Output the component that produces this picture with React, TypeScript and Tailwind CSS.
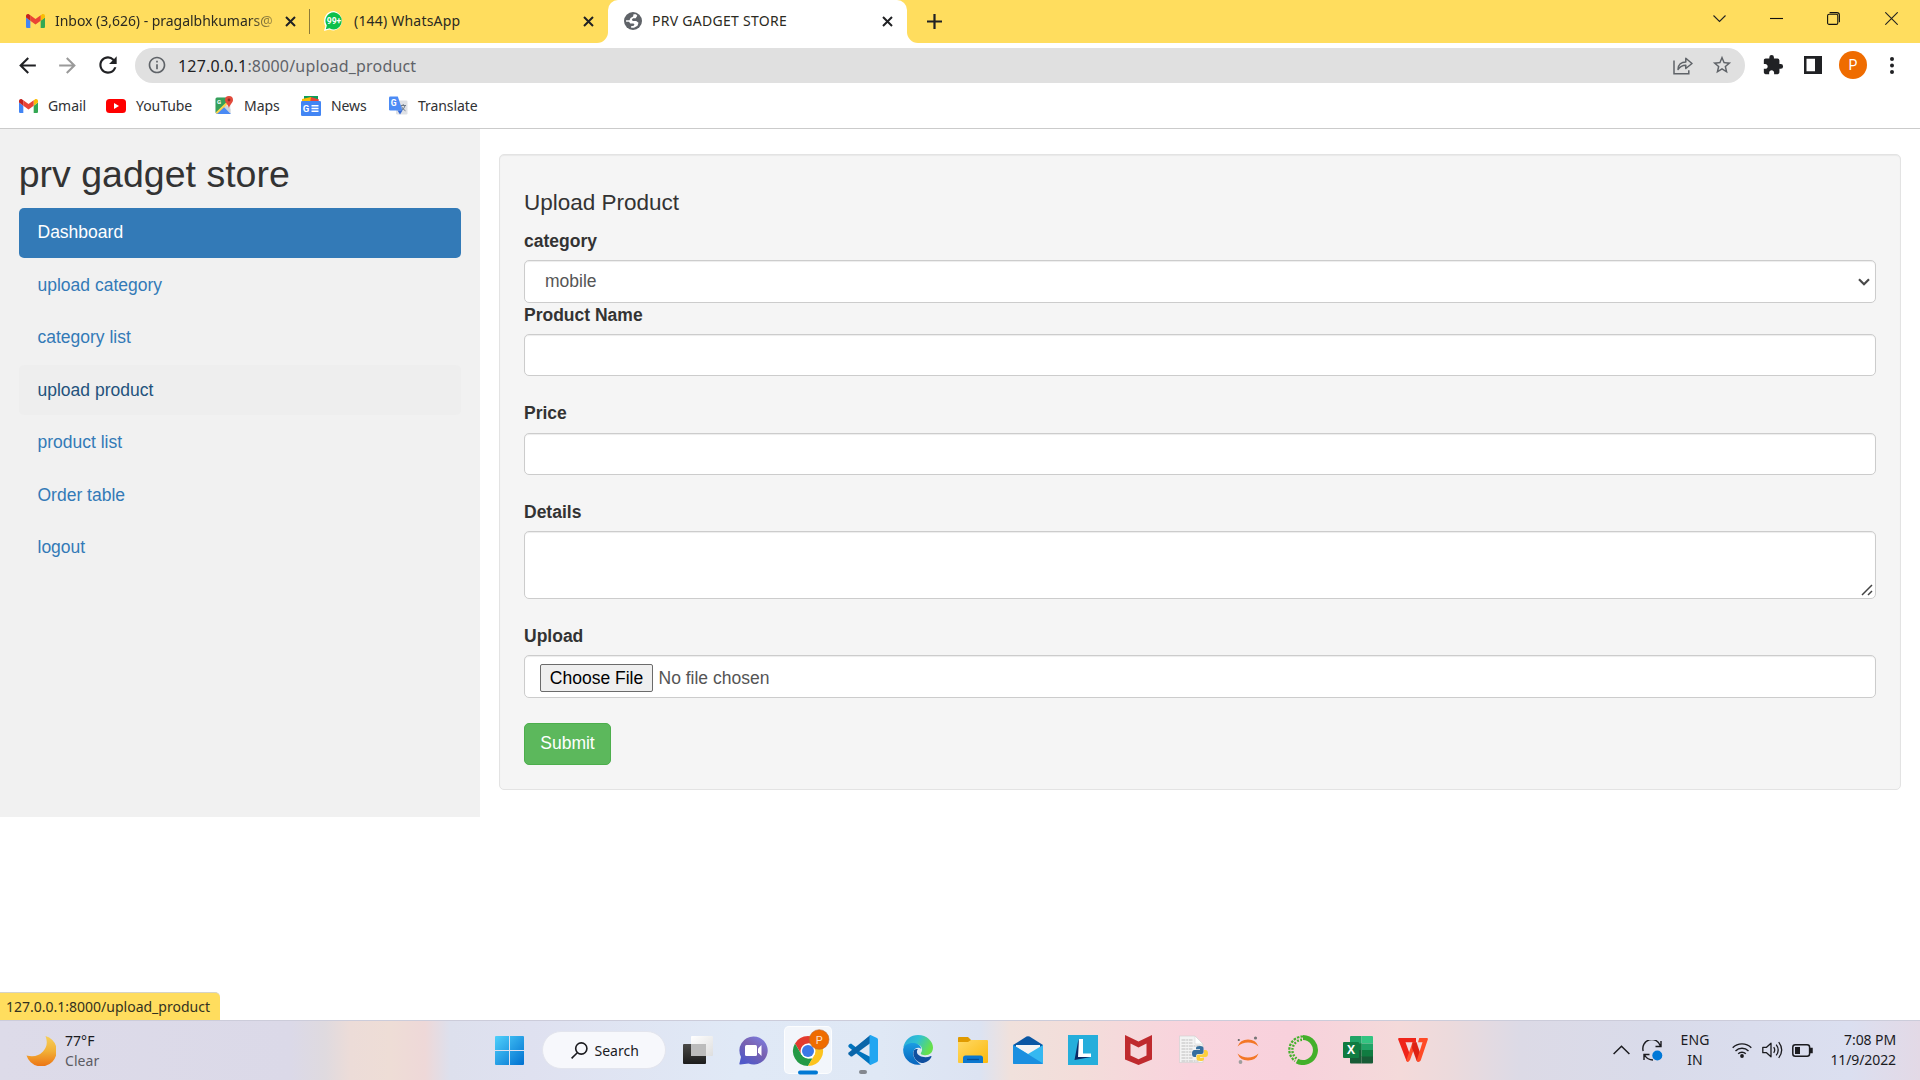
import type { ReactNode } from "react";
import { MdExtension, MdRefresh, MdStarOutline, MdArrowBack, MdArrowForward, MdInfoOutline } from "react-icons/md";

const ui = "font-['Noto_Sans','Open_Sans',sans-serif]";

function GmailIcon() {
  return (
    <svg className="h-[14px] w-[19px] shrink-0" viewBox="52 42 88 66" preserveAspectRatio="none">
      <path fill="#4285f4" d="M58 108h14V74L52 59v43c0 3.32 2.69 6 6 6" />
      <path fill="#34a853" d="M120 108h14c3.32 0 6-2.69 6-6V59l-20 15" />
      <path fill="#fbbc04" d="M120 48v26l20-15v-8c0-7.42-8.47-11.65-14.4-7.2" />
      <path fill="#ea4335" d="M72 74V48l24 18 24-18v26L96 92" />
      <path fill="#c5221f" d="M52 51v8l20 15V48l-5.6-4.2c-5.94-4.45-14.4-.22-14.4 7.2" />
    </svg>
  );
}

function WhatsAppIcon() {
  return (
    <svg className="h-5 w-5 shrink-0" viewBox="0 0 20 20">
      <path d="M10 0a10 10 0 0 1 0 19.6q-2.500 0-4.600-1.100L0 20l1.400-5A10 10 0 0 1 10 0" fill="#fff" />
      <path d="M10 1.200a8.700 8.700 0 0 1 0 17.300q-2.500 0-4.500-1.300L1.800 18.200l1-3.700A8.700 8.700 0 0 1 10 1.200" fill="#0cc04a" />
      <text x="10" y="13.400" textAnchor="middle" fontSize="8.800" fontWeight="700" fill="#fff" fontFamily="Roboto" textLength="14.500" lengthAdjust="spacingAndGlyphs">99+</text>
    </svg>
  );
}

function GlobeIcon() {
  return (
    <svg className="h-[18px] w-[18px] shrink-0" viewBox="0 0 18 18">
      <circle cx="9" cy="9" r="9" fill="#5f6368" />
      <path d="M9.500 2.200h2.500l1.300 1.600-1.600 2.400H9L7.800 7.800l1 1.200h3.400l2.300 1.800-1 3-3.500 2H7.200l-.2-1.500 2.800-.6.6-1.400-1-.9H6.300L5 9.800H2.100L2 8.200h3.500l1-2.300 2.600-1.500z" fill="#fff" />
    </svg>
  );
}

function CloseX({ className = "" }: { className?: string }) {
  return (
    <svg className={"h-[11px] w-[11px] shrink-0 " + className} viewBox="0 0 11 11" stroke="#202124" strokeWidth="2">
      <path d="M1 1l9 9M10 1L1 10" />
    </svg>
  );
}

function TabBar() {
  return (
    <div className={"flex h-[43px] bg-white text-[14px] text-[#2b2a22] " + ui}>
      <div className="flex w-[608px] items-center rounded-br-[11px] bg-[#ffdd5e] pb-[1px]">
        <div className="flex w-[309px] items-center pl-[26px]">
          <GmailIcon />
          <span className="ml-[10px] w-[219px] pb-[2px] tracking-[-0.03px] whitespace-nowrap [mask-image:linear-gradient(to_right,black_88%,transparent_106%)]">
            Inbox (3,626) - pragalbhkumars@
          </span>
          <CloseX className="ml-[11px]" />
        </div>
        <div className="h-[25px] w-[1px] bg-[#8c7a38]" />
        <div className="flex flex-1 items-center pl-[14px]">
          <WhatsAppIcon />
          <span className="ml-[10px] flex-1 pb-[2px] tracking-[0.2px]">(144) WhatsApp</span>
          <CloseX className="mr-[14px]" />
        </div>
      </div>
      <div className="w-[299px] bg-[#ffdd5e]">
        <div className="flex h-full items-center rounded-t-[10px] bg-white pb-[1px] pl-4">
          <GlobeIcon />
          <span className="ml-[10px] flex-1 pb-[2px] tracking-[0.28px]">PRV GADGET STORE</span>
          <CloseX className="mr-[14px]" />
        </div>
      </div>
      <div className="flex flex-1 items-center rounded-bl-[11px] bg-[#ffdd5e] pl-[20px]">
        <svg className="h-[15px] w-[15px]" viewBox="0 0 15 15" stroke="#202124" strokeWidth="2.200">
          <path d="M7.500 0v15M0 7.500h15" />
        </svg>
        <div className="ml-auto flex items-center gap-[44px] pr-[22px] pb-[6px]">
          <svg className="h-[13px] w-[13px] -translate-x-[1px]" viewBox="0 0 13 13" fill="none" stroke="#222" strokeWidth="1.100"><path d="M.5 3.500l6 6 6-6" /></svg>
          <svg className="h-[13px] w-[13px] -translate-x-[1px]" viewBox="0 0 13 13" stroke="#111" strokeWidth="1.100"><path d="M0 6.500h13" /></svg>
          <svg className="h-[13px] w-[13px] -translate-x-[1px]" viewBox="0 0 13 13" fill="none" stroke="#111" strokeWidth="1.100"><rect x=".6" y="2.200" width="10.200" height="10.200" rx="1.500" /><path d="M2.600 .6h7.200q2.600 0 2.600 2.600v7" /></svg>
          <svg className="h-[13px] w-[13px]" viewBox="0 0 13 13" stroke="#222" strokeWidth="1.100"><path d="M.3.3l12.400 12.400M12.700.3L.3 12.700" /></svg>
        </div>
      </div>
    </div>
  );
}

function AddressBar() {
  return (
    <div className="flex h-[45px] items-center bg-white pb-[1px]">
      <MdArrowBack className="ml-[15px] h-[25px] w-[25px] text-[#202124]" />
      <MdArrowForward className="ml-[15px] h-[25px] w-[25px] text-[#9a9a9a]" />
      <MdRefresh className="ml-[15px] h-[26px] w-[26px] text-[#202124]" />
      <div className="ml-[14px] flex h-[35px] w-[1610px] items-center rounded-full bg-[#e0e0e0] pl-[12px]">
        <MdInfoOutline className="h-5 w-5 text-[#5f6368]" />
        <span className={"ml-[11px] flex-1 pt-[1px] text-[16px] tracking-[0.18px] text-[#5f6368] " + ui}>
          <span className="text-[#202124]">127.0.0.1</span>:8000/upload_product
        </span>
        <svg className="h-[19px] w-[20px]" viewBox="0 0 20 19" fill="none" stroke="#5f6368" strokeWidth="1.500">
          <path d="M1 4.500v13.300h14.800v-3.500" />
          <path d="M5 13.500C5 8.500 8.500 6 12.800 6V2.200L19 7.500l-6.200 5V9.300C9.500 9.300 7 10.500 5 13.500z" strokeLinejoin="round" />
        </svg>
        <MdStarOutline className="mr-[12px] ml-[18px] h-[22px] w-[22px] text-[#5f6368]" />
      </div>
      <MdExtension className="ml-[17px] h-[22px] w-[22px] text-[#202124]" />
      <svg className="ml-[20px] h-[18px] w-[18px]" viewBox="0 0 18 18"><path fill="#202124" fillRule="evenodd" d="M0 0h18v18H0zM2.500 2.800h8.500v12.400H2.500z" /></svg>
      <div className="ml-[17px] flex h-7 w-7 items-center justify-center rounded-full bg-[#ef6c00] font-['Roboto',sans-serif] text-[14px] text-white">P</div>
      <svg className="ml-[23px] h-[17px] w-[4px]" viewBox="0 0 4 17" fill="#202124"><circle cx="2" cy="2" r="2" /><circle cx="2" cy="8.500" r="2" /><circle cx="2" cy="15" r="2" /></svg>
    </div>
  );
}

function YouTubeIcon() {
  return (
    <svg className="h-[14px] w-5" viewBox="0 0 20 14"><rect width="20" height="14" rx="3.500" fill="#f00" /><path d="M8 4v6l5-3z" fill="#fff" /></svg>
  );
}
function MapsIcon() {
  return (
    <svg className="h-[19px] w-[19px]" viewBox="0 0 19 19">
      <rect x=".5" y="1.500" width="15" height="16.500" rx="1.500" fill="#e8eaed" />
      <path d="M.5 3q0-1.500 1.500-1.500h9L12 7 .5 17z" fill="#34a05a" />
      <path d="M1 18L8.500 10l7.500 8z" fill="#4a8af4" />
      <path d="M10.500 8.500L15.500 13v4.500L8.500 10.500z" fill="#cfd3d8" />
      <path d="M.8 16.500L11 6.500l1.500 1.500L2 18z" fill="#fdd34a" />
      <text x="2" y="7.500" fontSize="6" fontWeight="700" fill="#fff" fontFamily="Roboto">G</text>
      <path d="M14 0a4 4 0 0 1 4 4c0 3-3.300 4.200-4 8.500-.7-4.300-4-5.500-4-8.500a4 4 0 0 1 4-4" fill="#e24a3b" /><circle cx="14" cy="4" r="1.400" fill="#8c2a22" />
    </svg>
  );
}
function NewsIcon() {
  return (
    <svg className="h-5 w-5" viewBox="0 0 20 20">
      <path d="M3 0h14v6H3z" fill="#0c9d58" /><path d="M1 3l9-2 1 5H1z" fill="#fbbc04" /><path d="M10 1l8 2.500L17 7H9z" fill="#ea4335" />
      <rect y="5" width="20" height="15" rx="1.300" fill="#4285f4" />
      <text x="1.800" y="15.800" fontSize="9.500" fontWeight="700" fill="#fff" fontFamily="Roboto">G</text>
      <path d="M10.500 9.800h7M10.500 12.500h7M10.500 15.200h7" stroke="#fff" strokeWidth="1.400" />
    </svg>
  );
}
function TranslateIcon() {
  return (
    <svg className="h-[19px] w-[19px]" viewBox="0 0 19 19">
      <rect x="7" y="4.500" width="11.500" height="14" rx="1.200" fill="#dfe1e5" />
      <path d="M11.500 9.500h5.500M14.200 8v1.500M16 9.800q-1 3.500-4 5M12.500 10.500q1.300 3 4 4.300" stroke="#6f7b8a" strokeWidth="1" fill="none" />
      <path d="M1.300.500h7.500L13.500 14.500H1.300Q0 14.500 0 13.200V1.800Q0 .500 1.300.500" fill="#4c8bf5" />
      <path d="M8.500 14.500h5L11 18.500z" fill="#3367d6" />
      <text x="1.800" y="10.300" fontSize="8.500" fontWeight="700" fill="#fff" fontFamily="Roboto">G</text>
    </svg>
  );
}

function Bookmark({ icon, label, className }: { icon: ReactNode; label: string; className: string }) {
  return (
    <div className={"flex items-center gap-[10px] " + className}>
      {icon}
      <span className="pb-[1px]">{label}</span>
    </div>
  );
}

function BookmarksBar() {
  return (
    <div className={"flex h-[41px] items-center border-b border-[#cbcbcb] bg-white pb-[5px] pl-[19px] text-[14px] tracking-[-0.07px] text-[#303134] " + ui}>
      <Bookmark className="w-[87px]" icon={<GmailIcon />} label="Gmail" />
      <Bookmark className="w-[109px]" icon={<YouTubeIcon />} label="YouTube" />
      <Bookmark className="w-[86px]" icon={<MapsIcon />} label="Maps" />
      <Bookmark className="w-[88px]" icon={<NewsIcon />} label="News" />
      <Bookmark className="" icon={<TranslateIcon />} label="Translate" />
    </div>
  );
}

const navItems = [
  { label: "Dashboard", style: "bg-[#337ab7] text-white" },
  { label: "upload category", style: "text-[#337ab7]" },
  { label: "category list", style: "text-[#337ab7]" },
  { label: "upload product", style: "bg-[#eeeeee] text-[#23527c]" },
  { label: "product list", style: "text-[#337ab7]" },
  { label: "Order table", style: "text-[#337ab7]" },
  { label: "logout", style: "text-[#337ab7]" },
];

function Sidebar() {
  return (
    <aside className="h-[688px] w-[480px] bg-[#f1f1f1] px-[18.75px] pt-[25px]">
      <h2 className="mb-[12.5px] text-[37.5px] leading-[41.25px]">prv gadget store</h2>
      <nav className="flex flex-col gap-[2.5px]">
        {navItems.map((item) => (
          <a key={item.label} className={"h-[50px] rounded-[5px] px-[18.75px] py-[12.5px] leading-[25px] " + item.style}>
            {item.label}
          </a>
        ))}
      </nav>
    </aside>
  );
}

const control = "w-full rounded-[5px] border border-[#cccccc] bg-white shadow-[inset_0_1px_1px_rgba(0,0,0,0.075)] ";

function FieldLabel({ children }: { children: ReactNode }) {
  return <label className="mb-[6.25px] block leading-[25px] font-bold">{children}</label>;
}

function UploadForm() {
  return (
    <form className="mt-[25px] ml-[19px] h-[636px] w-[1402px] rounded-[5px] border border-[#e3e3e3] bg-[#f5f5f5] px-[24px] pt-[36.25px] shadow-[inset_0_1px_1px_rgba(0,0,0,0.05)]">
      <h4 className="mb-[12.5px] text-[22.5px] leading-[24.75px]">Upload Product</h4>
      <FieldLabel>category</FieldLabel>
      <div className={control + "flex h-[43px] items-center justify-between pr-[5px] pl-[20px] text-[#555555]"}>
        <span>mobile</span>
        <svg className="h-[8px] w-[12px] translate-y-[1px]" viewBox="0 0 12 8" fill="none" stroke="#4a4a4a" strokeWidth="2.200"><path d="M1 1.200l5 5 5-5" /></svg>
      </div>
      <FieldLabel>Product Name</FieldLabel>
      <input className={control + "mb-[25px] block h-[42px] px-[15px]"} />
      <FieldLabel>Price</FieldLabel>
      <input className={control + "mt-[6.75px] mb-[24.75px] block h-[42.5px] px-[15px]"} />
      <FieldLabel>Details</FieldLabel>
      <div className={control + "mb-[25px] flex h-[67.75px] items-end justify-end p-[2px]"}>
        <svg className="h-[12px] w-[12px]" viewBox="0 0 12 12" stroke="#444" strokeWidth="1.500"><path d="M1 11L11 1M7 11l4-4" /></svg>
      </div>
      <FieldLabel>Upload</FieldLabel>
      <div className={control + "mb-[25px] flex h-[42.5px] items-center px-[15px] pt-[2px] text-[#555555]"}>
        <button type="button" className="h-[28px] w-[113px] rounded-[2px] border border-[#6b6b6b] bg-[#efefef] leading-[26px] text-black">Choose File</button>
        <span className="ml-[5.5px] pt-[1px]">No file chosen</span>
      </div>
      <button type="button" className="h-[42.5px] w-[87px] rounded-[5px] border border-[#4cae4c] bg-[#5cb85c] pb-[2px] text-white">Submit</button>
    </form>
  );
}

function AppCell({ children, active }: { children: ReactNode; active?: boolean }) {
  return (
    <div className="flex w-[55px] items-center justify-center pb-[1px]">
      <div className={"flex h-12 w-12 items-center justify-center rounded-[5px] " + (active ? "border border-white/70 bg-white/60" : "")}>{children}</div>
    </div>
  );
}

function WindowsLogo() {
  return (
    <svg className="h-[29px] w-[29px]" viewBox="0 0 29 29">
      <defs><linearGradient id="win" x1="0" y1="0" x2="29" y2="29" gradientUnits="userSpaceOnUse"><stop stopColor="#4fd0fb" /><stop offset="1" stopColor="#0070d0" /></linearGradient></defs>
      <path fill="url(#win)" d="M1 0h13v14H0V1q0-1 1-1M15 0h13q1 0 1 1v13H15zM0 15h14v14H1q-1 0-1-1zM15 15h14v13q0 1-1 1H15z" />
    </svg>
  );
}
function TaskView() {
  return (
    <svg className="h-[30px] w-[30px]" viewBox="0 0 30 30">
      <defs>
        <linearGradient id="tvd" x1="0" y1="0" x2="0" y2="1"><stop stopColor="#4a4a48" /><stop offset="1" stopColor="#1c1c1c" /></linearGradient>
        <linearGradient id="tvl" x1="0" y1="0" x2="1" y2="1"><stop stopColor="#fff" /><stop offset="1" stopColor="#dedede" /></linearGradient>
      </defs>
      <rect y="9" width="23" height="20" rx="1" fill="url(#tvd)" />
      <rect x="8" y="1" width="22" height="20" rx="1" fill="url(#tvl)" />
      <path d="M8 9h15v12H8z" fill="#bcbcbc" />
    </svg>
  );
}
function ChatIcon() {
  return (
    <svg className="h-[29px] w-[29px]" viewBox="0 0 29 29">
      <defs><linearGradient id="chat" x1="1" y1="0" x2="0.300" y2="1"><stop stopColor="#7b83eb" /><stop offset=".5" stopColor="#7a62b0" /><stop offset="1" stopColor="#5059c9" /></linearGradient></defs>
      <path d="M14.500.500a14 14 0 1 1-5 27L1.500 28.500Q0 28.500.500 27l1.500-6A14 14 0 0 1 14.500.500" fill="url(#chat)" />
      <rect x="6" y="9" width="12" height="11" rx="1.500" fill="#fff" /><path d="M19 12.500L22.500 9v11L19 16.500z" fill="#fff" />
    </svg>
  );
}
function ChromeIcon() {
  return (
    <svg className="h-[36px] w-[36px] -translate-y-[2px] translate-x-[3px] overflow-visible" viewBox="0 0 36 36">
      <g transform="translate(0 6)">
        <path d="M2 7.500A15 15 0 0 1 28 7.500H15L8.500 18.500z" fill="#e33b2e" />
        <path d="M2 7.500l6.500 11.200 6.500 3.800h4.500L15 30A15 15 0 0 1 2 7.500" fill="#249a46" />
        <path d="M28 7.500A15 15 0 0 1 15 30l6.500-11.300V12l-2-4.500z" fill="#fcc31e" />
        <circle cx="15" cy="15" r="7.500" fill="#fff" /><circle cx="15" cy="15" r="6" fill="#3b78e7" />
      </g>
      <circle cx="26.200" cy="9.500" r="9.800" fill="#ef6c00" stroke="#b86a35" strokeWidth=".6" />
      <text x="26.200" y="13.500" fontSize="11" textAnchor="middle" fill="#fbe0cc" fontFamily="Roboto">P</text>
      <rect x="5" y="40.500" width="20" height="4" rx="2" fill="#0078d4" />
    </svg>
  );
}
function VsCodeIcon() {
  return (
    <svg className="h-[30px] w-[30px] overflow-visible" viewBox="0 0 30 30">
      <path d="M22.500 0L8.500 12.800 3 8.600 1 9.400Q-.5 10.800.8 12.200L22.500 30V22L9 15z" fill="#0073bd" />
      <path d="M22.500 8L4 21.500 2.800 21.400.6 19.400Q-.3 18.500.7 17.600L22.500 0z" fill="#0a65a9" />
      <path d="M22.500 0q-1.200.200-1 1.500v27q-.2 1.300 1 1.500L29 27q1-.6 1-1.800V4.700Q30 3.500 29 3z" fill="#22a6f1" />
      <rect x="11" y="35" width="8" height="4" rx="2" fill="#84888f" />
    </svg>
  );
}
function EdgeIcon() {
  return (
    <svg className="h-[30px] w-[30px]" viewBox="0 0 30 30">
      <defs>
        <linearGradient id="e1" x1="0" y1="0" x2="1" y2=".4"><stop stopColor="#2aa5dc" /><stop offset=".5" stopColor="#2fc1d3" /><stop offset="1" stopColor="#66e04c" /></linearGradient>
        <linearGradient id="e2" x1="0" y1="0" x2="0" y2="1"><stop stopColor="#1b9de2" /><stop offset="1" stopColor="#0763bd" /></linearGradient>
      </defs>
      <path d="M.3 12.500C1.800 4.500 8 0 15 0c9 0 15 6.500 15 12.500 0 5-3.500 7.700-7.500 7.700-3.500 0-5.300-1.200-4.600-2.300 3-3.700.2-9-5.400-9C7 9 2.500 11 .3 12.500" fill="url(#e1)" />
      <path d="M.2 14C1 10 5.500 7.500 11 8c4 .3 7 3 7.300 6-2-2-5.500-1.800-7.200 1-2.500 4.500.5 10.500 6.900 14.500C8 31.500-.500 23.500.2 14" fill="url(#e2)" />
      <path d="M11.200 15c-3 6 2.500 12.500 7.500 13 4 .1 8-2.500 9.700-6 .3-.8-.3-1.200-1-.8-5 2.300-13 .5-13.500-4.200-.1-1.700 1.100-3 1.100-3-1.500-.3-3 .2-3.800 1" fill="#104f9f" />
    </svg>
  );
}
function FolderIcon() {
  return (
    <svg className="h-[28px] w-[30px]" viewBox="0 0 30 28">
      <defs><linearGradient id="fo" x1="0" y1="0" x2="1" y2="1"><stop stopColor="#ffd966" /><stop offset="1" stopColor="#fbb90c" /></linearGradient></defs>
      <path d="M0 2q0-1 1-1h9l3 3v5H0z" fill="#e09a00" />
      <path d="M0 6h10l3-2h16q1 0 1 1v21q0 1-1 1H1q-1 0-1-1z" fill="url(#fo)" />
      <path d="M5 27v-5q0-2.500 2.500-2.500h15Q25 19.500 25 22v5z" fill="#0b77cf" /><path d="M9 23.500h12" stroke="#064e94" strokeWidth="1.300" />
    </svg>
  );
}
function MailIcon() {
  return (
    <svg className="h-[28px] w-[30px]" viewBox="0 0 30 28">
      <path d="M0 9L13.500.600q1.500-.8 3 0L30 9v6H0z" fill="#0a57a4" /><path d="M3 9h24v8l-12 6L3 17z" fill="#f4f4f4" />
      <path d="M0 9l15 9 15-9v18q0 1-1 1H1q-1 0-1-1z" fill="#35b8f1" /><path d="M0 9l30 18.500-1 .5H1q-1 0-1-1z" fill="#1a8fe0" />
    </svg>
  );
}
function LIcon() {
  return (
    <svg className="h-[30px] w-[30px]" viewBox="0 0 30 30">
      <rect width="30" height="30" fill="#25aedb" /><path d="M10.500 4L6.500 25l16.500-3-11-2z" fill="#0b2a66" /><path d="M11 4h4v14.500h8V22H10z" fill="#fff" />
    </svg>
  );
}
function McAfeeIcon() {
  return (
    <svg className="h-[30px] w-[27px]" viewBox="0 0 27 30">
      <path d="M0 0l13.500 6.500L27 0v24.500L13.500 30 0 24.500zM5.500 8.500v12l8 3.700 8-3.700v-12l-8 4z" fillRule="evenodd" fill="#bf2a2e" />
    </svg>
  );
}
function PythonFileIcon() {
  return (
    <svg className="h-[30px] w-[30px]" viewBox="0 0 30 30">
      <path d="M1.500 1H17l8 8v18.500H1.500z" fill="#f3f3f3" stroke="#cfcfcf" strokeWidth=".6" />
      <path d="M17 1l8 8h-8z" fill="#fff" stroke="#ccc" strokeWidth=".5" />
      <path d="M3.500 5h11M3.500 8h11M3.500 11h19M3.500 14h11M3.500 17h10M3.500 20h10M3.500 23h11M3.500 26h17" stroke="#bdbdbd" strokeWidth="1" strokeDasharray="4 .7 2 .7" />
      <path d="M22 11c3 0 3.500 1 3.500 2.500V17q0 2-2 2H20q-2 0-2 2v1h-1.500q-2.500 0-2.500-3.500t2.500-3.500H22v-.7h-4V13q0-2 4-2" fill="#366f9f" />
      <path d="M22.500 26c-3 0-4-1-4-2.500V21q0-1.500 2-1.500h3.500q2 0 2-2V15h1.500q2.500 0 2.500 3.500T27.500 22H22v.8h4V24q0 2-3.500 2" fill="#fcd03b" />
    </svg>
  );
}
function JupyterIcon() {
  return (
    <svg className="h-[28px] w-[22px]" viewBox="0 0 22 28">
      <path d="M.5 10.500Q3 3.500 11 3.500t10.500 7Q17 6.500 11 6.500T.5 10.500M.5 17.500Q3 24.500 11 24.500t10.500-7Q17 21.500 11 21.500T.5 17.500" fill="#f37726" />
      <circle cx="18.500" cy="2" r="1.600" fill="#767677" /><circle cx="1.800" cy="4" r="1.100" fill="#616262" /><circle cx="3.500" cy="26" r="1.900" fill="#9e9e9e" />
    </svg>
  );
}
function AnacondaIcon() {
  return (
    <svg className="h-[30px] w-[30px]" viewBox="0 0 30 30" fill="none" stroke="#43b02a">
      <path d="M15 2.500A12.500 12.500 0 1 1 9 26" strokeWidth="5" />
      <path d="M15 1.500A13.500 13.500 0 0 0 7 26" strokeWidth="2.200" strokeDasharray="2.500 1.200" /><path d="M14 4.700A10.500 10.500 0 0 0 8.500 23.500" strokeWidth="2.400" strokeDasharray="1.800 1.500" />
    </svg>
  );
}
function ExcelIcon() {
  return (
    <svg className="h-[28px] w-[30px]" viewBox="0 0 30 28">
      <path d="M7 1q0-1 1-1h10.500v14H7z" fill="#21a366" /><path d="M18.500 0H29q1 0 1 1v6.500H18.500z" fill="#33c481" /><path d="M18.500 7.500H30V14H18.500z" fill="#21a366" /><path d="M7 7.500h11.500V14H7z" fill="#107c41" />
      <path d="M7 14h11.500v13.500H8q-1 0-1-1z" fill="#185c37" /><path d="M18.500 14H30v7H18.500z" fill="#107c41" /><path d="M18.500 20.500H30V26.500q0 1-1 1H18.500z" fill="#185c37" />
      <rect y="6" width="16" height="16" rx="1" fill="#107c41" /><text x="8" y="18.200" fontSize="12" fontWeight="700" textAnchor="middle" fill="#fff" fontFamily="Open Sans">X</text>
    </svg>
  );
}
function WpsIcon() {
  return (
    <svg className="h-[24px] w-[30px]" viewBox="0 0 30 24">
      <path d="M1 0h17v4.200H7.500L12.500 18 10.800 23q-1 1.500-2.300 0L.2 1.500Q0 .200 1 0" fill="#ef2419" />
      <path d="M8.200 22.800L14.500 4.200H18.500L12 22q-1.800 3-3.800.8" fill="#ff4d2b" />
      <path d="M14.500 4.200H18.500L23 17.500 21.500 23q-1.500 1.500-2.800 0L14 10z" fill="#dd2114" />
      <path d="M18.700 22.800L24.500 4.200H20L21.300 0H29q1.200.200.8 1.500L22.700 22.500q-2 2.500-4 .3" fill="#ff4a26" />
    </svg>
  );
}

function Taskbar() {
  return (
    <footer className={"flex h-[60px] items-stretch border-t border-[#ccccda] text-[#1b1b1f] " + ui + " bg-[linear-gradient(90deg,#dddbe9_0px,#dbd9e8_290px,#dfdadf_325px,#ecdcd8_350px,#eeddd6_390px,#eed8d8_425px,#dde0ed_450px,#dfe1f0_530px,#e0e9f6_740px,#dfe8f5_880px,#dce3f2_980px,#f0e1dc_1010px,#f3ddda_1080px,#f9d3dd_1190px,#f8d1dc_1290px,#f4dada_1400px,#ecdadc_1450px,#dcdae6_1520px,#d9dbea_1650px,#dbdff0_1850px,#e3d9e6_1920px)]"}>
      <div className="flex w-[481.5px] items-center pl-[26px]">
        <svg className="h-[30px] w-[30px]" viewBox="0 0 30 30">
          <defs><linearGradient id="moon" x1="0" y1="0" x2="0" y2="1"><stop stopColor="#f6cf5a" /><stop offset=".5" stopColor="#f2b036" /><stop offset="1" stopColor="#ec7414" /></linearGradient></defs>
          <path d="M19.500 0A15.500 15.500 0 1 1 .5 19.500Q11 22 17 15.500T19.500 0" fill="url(#moon)" />
        </svg>
        <div className="ml-[9px] text-[14px] leading-[20px] tracking-[0.05px]">
          <div>77°F</div>
          <div className="text-[#5b5b63]">Clear</div>
        </div>
      </div>
      <AppCell><WindowsLogo /></AppCell>
      <div className="mr-[5px] ml-[5px] mt-[10px] flex h-[38px] w-[124px] items-center rounded-full border border-[#e3e5ee] bg-[#f7f8fc] pl-[28px]">
        <svg className="h-[17px] w-[17px]" viewBox="0 0 17 17" fill="none" stroke="#1b1b1f" strokeWidth="1.600"><circle cx="10.300" cy="6.500" r="5.600" /><path d="M6.300 10.700L.6 16.400" /></svg>
        <span className="ml-[7px] text-[14px]">Search</span>
      </div>
      <AppCell><TaskView /></AppCell>
      <AppCell><ChatIcon /></AppCell>
      <AppCell active><ChromeIcon /></AppCell>
      <AppCell><VsCodeIcon /></AppCell>
      <AppCell><EdgeIcon /></AppCell>
      <AppCell><FolderIcon /></AppCell>
      <AppCell><MailIcon /></AppCell>
      <AppCell><LIcon /></AppCell>
      <AppCell><McAfeeIcon /></AppCell>
      <AppCell><PythonFileIcon /></AppCell>
      <AppCell><JupyterIcon /></AppCell>
      <AppCell><AnacondaIcon /></AppCell>
      <AppCell><ExcelIcon /></AppCell>
      <AppCell><WpsIcon /></AppCell>
      <div className="ml-auto flex items-center pr-6 pb-[1px] text-[14px] leading-[20px]">
        <svg className="h-[10px] w-[17px]" viewBox="0 0 17 10" fill="none" stroke="#1b1b1f" strokeWidth="1.500"><path d="M.6 9L8.500 1.200 16.400 9" /></svg>
        <svg className="ml-[12px] h-[21px] w-[21px]" viewBox="0 0 21 21" fill="none" stroke="#1b1b1f" strokeWidth="1.400">
          <path d="M1.200 11A9 9 0 0 1 18.500 6M19 1v5.500h-5.500M2 20v-5.500h5.500M2.500 15q3 5 8.500 5" /><circle cx="15.300" cy="15.500" r="5" fill="#0078d7" stroke="none" />
        </svg>
        <div className="ml-[16px] w-[32px] text-center tracking-[0.1px]"><div>ENG</div><div>IN</div></div>
        <svg className="ml-[21px] h-[16px] w-[20px]" viewBox="0 0 20 16" fill="none" stroke="#1b1b1f" strokeWidth="1.400">
          <path d="M.7 5.800a13 13 0 0 1 18.600 0M3.500 9a9.200 9.200 0 0 1 13 0M6.200 11.800a5.400 5.400 0 0 1 7.600 0" /><circle cx="10" cy="14" r="1.900" fill="#1b1b1f" stroke="none" />
        </svg>
        <svg className="ml-[10px] h-[18px] w-[21px]" viewBox="0 0 21 18" fill="none" stroke="#1b1b1f" strokeWidth="1.300" strokeLinejoin="round">
          <path d="M.8 6.300h3.700L9 2.200v13.600l-4.500-4.100H.8z" /><path d="M11.700 6.200q2 2.800 0 5.600M14.200 3.600q4 5.400 0 10.800M16.700 1.200q6 7.800 0 15.600" />
        </svg>
        <svg className="ml-[9px] h-[13px] w-[21px]" viewBox="0 0 21 13" fill="none" stroke="#1b1b1f" strokeWidth="1.500">
          <rect x=".8" y=".8" width="16.800" height="11.400" rx="2.500" /><path d="M18.500 4.500h1.500v4h-1.500z" fill="#1b1b1f" /><rect x="3" y="3" width="5" height="7" fill="#1b1b1f" stroke="none" />
        </svg>
        <div className="w-[83px] text-right tracking-[-0.1px] whitespace-nowrap"><div>7:08 PM</div><div>11/9/2022</div></div>
      </div>
    </footer>
  );
}

export default function App() {
  return (
    <div className="flex h-[1080px] w-[1920px] flex-col overflow-hidden bg-white font-['Liberation_Sans',Arial,sans-serif] text-[17.5px] text-[#333333]">
      <TabBar />
      <AddressBar />
      <BookmarksBar />
      <main className="flex flex-1 items-start">
        <Sidebar />
        <UploadForm />
      </main>
      <div className={"flex h-[28px] w-[220px] items-center rounded-tr-[5px] border-t border-[#d6d3c6] bg-[#ffdd5e] pl-[6px] text-[14px] text-[#33311f] " + ui}>
        127.0.0.1:8000/upload_product
      </div>
      <Taskbar />
    </div>
  );
}
